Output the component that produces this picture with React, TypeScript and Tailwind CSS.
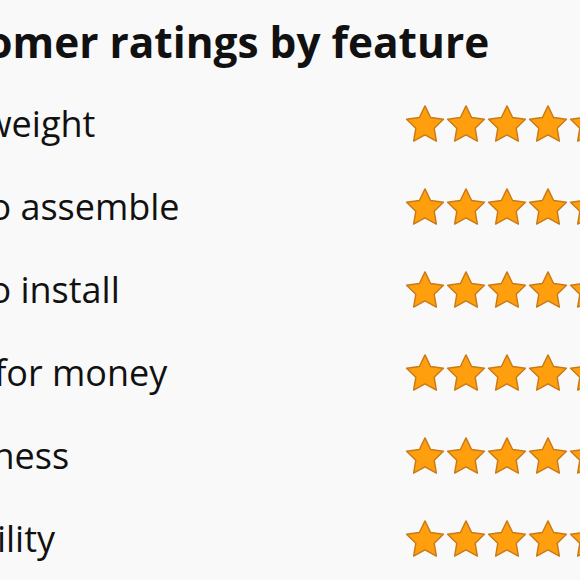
const features = [
  "Light weight",
  "Easy to assemble",
  "Easy to install",
  "Value for money",
  "Sturdiness",
  "Durability",
];

function Star() {
  return (
    <svg width="40" height="37" viewBox="1.3 0.7 21.4 20.5" className="shrink-0">
      <polygon
        points="12,1.2 15.1,7.6 22.2,8.6 17.1,13.6 18.3,20.7 12,17.3 5.7,20.7 6.9,13.6 1.8,8.6 8.9,7.6"
        fill="#ff9f0d"
        stroke="#c97a16"
        strokeWidth="0.8"
        strokeLinejoin="round"
      />
    </svg>
  );
}

export default function App() {
  return (
    <div className="w-[580px] h-[580px] overflow-hidden bg-[#f9f9f9] font-['Open_Sans',sans-serif] text-[#111]">
      <div className="ml-[-108px] w-[720px]">
        <h2 className="h-[82px] pt-[14px] text-[42.4px] leading-[56px] font-bold whitespace-nowrap">
          Customer ratings by feature
        </h2>
        <div className="flex flex-col">
          {features.map((f) => (
            <div key={f} className="h-[83px] flex items-center">
              <div className="w-[513px] text-[36px] leading-none whitespace-nowrap">{f}</div>
              <div className="flex gap-px">
                <Star />
                <Star />
                <Star />
                <Star />
                <Star />
              </div>
            </div>
          ))}
        </div>
      </div>
    </div>
  );
}
